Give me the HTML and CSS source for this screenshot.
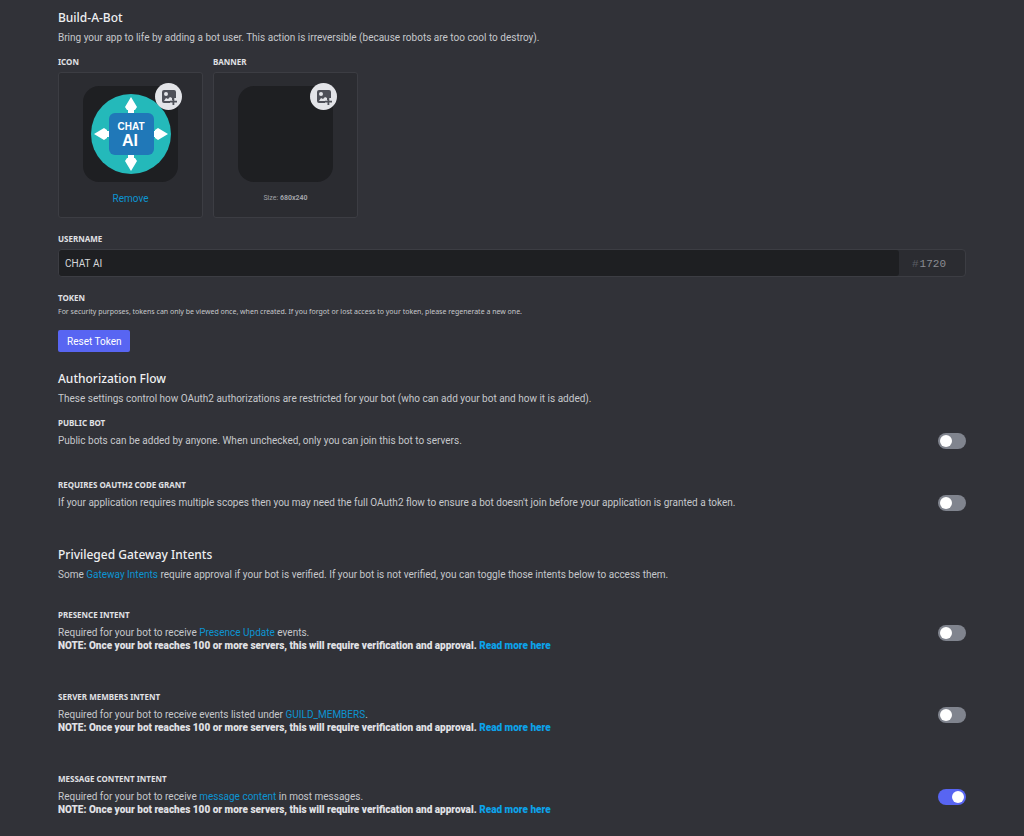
FILE: index.html
```html
<!DOCTYPE html>
<html lang="en">
<head>
    <meta charset="UTF-8">
    <meta name="viewport" content="width=device-width, initial-scale=1.0">
    <title>Build-A-Bot</title>
    <link rel="stylesheet" href="styles.css">
</head>
<body>
    <!-- shared "add image" icon -->
    <svg class="sprite" aria-hidden="true">
        <symbol id="add-image" viewBox="0 0 16 16">
            <path fill="#4e5058" fill-rule="evenodd" d="M3 1h10a2 2 0 0 1 2 2v6h-3v2H9v3H3a2 2 0 0 1-2-2V3a2 2 0 0 1 2-2zm2 2a2 2 0 1 0 0 4 2 2 0 0 0 0-4z"/>
            <path fill="#e3e4e8" d="M3 12l2-3 2 1 2-2 2 1v3H9v0H3z"/>
            <path fill="#4e5058" d="M11.500 9h1.800v2.700H16v1.800h-2.700V16h-1.800v-2.500H9v-1.800h2.500z"/>
        </symbol>
    </svg>

    <main class="container">
        <section class="build-section">
            <h2>Build-A-Bot</h2>
            <p>Bring your app to life by adding a bot user. This action is irreversible (because robots are too cool to destroy).</p>
            <div class="uploads">
                <div class="upload">
                    <h3>Icon</h3>
                    <div class="card">
                        <div class="preview">
                            <svg class="avatar" viewBox="0 0 80 80" role="img" aria-label="Chat AI">
                                <circle cx="40" cy="40" r="40" fill="#24b9ba"/>
                                <g fill="#fff">
                                    <path d="M40 3l6 10-2 3h-1v6h-6v-6h-1l-2-3z"/>
                                    <path d="M40 77l6-10-2-3h-1v-6h-6v6h-1l-2 3z"/>
                                    <path d="M3 40l10-6 3 2v1h6v6h-6v1l-3 2z"/>
                                    <path d="M77 40l-10-6-3 2v1h-6v6h6v1l3 2z"/>
                                </g>
                                <rect x="18" y="19" width="45" height="42" rx="6" fill="#2078b8"/>
                                <text class="logo-small" x="40" y="36">CHAT</text>
                                <text class="logo-big" x="39" y="52">AI</text>
                            </svg>
                            <button class="add" type="button" aria-label="Upload icon"><svg><use href="#add-image"/></svg></button>
                        </div>
                        <a class="remove" href="#">Remove</a>
                    </div>
                </div>
                <div class="upload">
                    <h3>Banner</h3>
                    <div class="card">
                        <div class="preview">
                            <button class="add" type="button" aria-label="Upload banner"><svg><use href="#add-image"/></svg></button>
                        </div>
                        <span class="size">Size: <b>680x240</b></span>
                    </div>
                </div>
            </div>

            <label class="title" for="username">Username</label>
            <div class="username">
                <input type="text" id="username" value="CHAT AI">
                <span class="tag"><span>#</span>1720</span>
            </div>

            <h3>Token</h3>
            <p class="note">For security purposes, tokens can only be viewed once, when created. If you forgot or lost access to your token, please regenerate a new one.</p>
            <button class="reset" type="button">Reset Token</button>
        </section>

        <section>
            <h2>Authorization Flow</h2>
            <p>These settings control how OAuth2 authorizations are restricted for your bot (who can add your bot and how it is added).</p>
            <div class="setting">
                <div>
                    <label class="title" for="public-bot">Public Bot</label>
                    <p>Public bots can be added by anyone. When unchecked, only you can join this bot to servers.</p>
                </div>
                <input class="switch" type="checkbox" id="public-bot">
            </div>
            <div class="setting">
                <div>
                    <label class="title" for="code-grant">Requires OAuth2 Code Grant</label>
                    <p>If your application requires multiple scopes then you may need the full OAuth2 flow to ensure a bot doesn't join before your application is granted a token.</p>
                </div>
                <input class="switch" type="checkbox" id="code-grant">
            </div>
        </section>

        <section class="intents">
            <h2>Privileged Gateway Intents</h2>
            <p>Some <a href="#">Gateway Intents</a> require approval if your bot is verified. If your bot is not verified, you can toggle those intents below to access them.</p>
            <div class="setting">
                <div>
                    <label class="title" for="presence">Presence Intent</label>
                    <p>Required for your bot to receive <a href="#">Presence Update</a> events.</p>
                    <p class="warning">NOTE: Once your bot reaches 100 or more servers, this will require verification and approval. <a href="#">Read more here</a></p>
                </div>
                <input class="switch" type="checkbox" id="presence">
            </div>
            <div class="setting">
                <div>
                    <label class="title" for="members">Server Members Intent</label>
                    <p>Required for your bot to receive events listed under <a href="#">GUILD_MEMBERS</a>.</p>
                    <p class="warning">NOTE: Once your bot reaches 100 or more servers, this will require verification and approval. <a href="#">Read more here</a></p>
                </div>
                <input class="switch" type="checkbox" id="members">
            </div>
            <div class="setting">
                <div>
                    <label class="title" for="message">Message Content Intent</label>
                    <p>Required for your bot to receive <a href="#">message content</a> in most messages.</p>
                    <p class="warning">NOTE: Once your bot reaches 100 or more servers, this will require verification and approval. <a href="#">Read more here</a></p>
                </div>
                <input class="switch" type="checkbox" id="message" checked>
            </div>
        </section>
    </main>
</body>
</html>
```
FILE: styles.css
```css
* {
    box-sizing: border-box;
}

body {
    margin: 0;
    background-color: #313238;
    color: #c6c8cc;
    font-family: Roboto, sans-serif;
    font-size: 10px;
    line-height: 13px;
}

.sprite {
    display: none;
}

.container {
    padding: 10px 58px 19px;
}

h2, h3, p {
    margin: 0;
}

h2 {
    color: #eeeff1;
    font-family: "Noto Sans", sans-serif;
    font-size: 12px;
    font-weight: 500;
    line-height: 16px;
    margin-bottom: 5px;
}

h3, .title {
    display: block;
    color: #e0e1e5;
    font-family: "Noto Sans", sans-serif;
    font-size: 8px;
    font-weight: 700;
    line-height: 10px;
    text-transform: uppercase;
}

a {
    color: #0c94d2;
    text-decoration: none;
}

button {
    border: none;
    padding: 0;
    font-family: inherit;
    cursor: pointer;
}

.build-section {
    margin-bottom: 19px;
}

/* Icon and banner */
.uploads {
    display: flex;
    gap: 10px;
    margin: 13px 0 16px;
}

.card {
    display: flex;
    flex-direction: column;
    align-items: center;
    width: 145px;
    height: 146px;
    margin-top: 5px;
    padding-top: 13px;
    background-color: #2b2c31;
    border: 1px solid #3c3d43;
    border-radius: 3px;
}

.preview {
    position: relative;
    display: flex;
    align-items: center;
    justify-content: center;
    width: 95px;
    height: 96px;
    margin-bottom: 10px;
    background-color: #1e1f22;
    border-radius: 16px;
}

.avatar {
    width: 80px;
    height: 80px;
}

.avatar text {
    fill: #fff;
    font-family: "Liberation Sans", sans-serif;
    font-weight: 700;
    text-anchor: middle;
}

.logo-small {
    font-size: 10px;
}

.logo-big {
    font-size: 16px;
}

.add {
    position: absolute;
    top: -3px;
    right: -4px;
    display: flex;
    align-items: center;
    justify-content: center;
    width: 27px;
    height: 27px;
    background-color: #e3e4e8;
    border-radius: 50%;
}

.add svg {
    width: 16px;
    height: 16px;
}

.size {
    color: #a0a2a8;
    font-size: 7px;
}

/* Username and token */
.username {
    display: flex;
    height: 28px;
    margin: 5px 0 16px;
    background-color: #2b2c31;
    border: 1px solid #3c3d43;
    border-radius: 4px;
}

.username input {
    flex: 1;
    min-width: 0;
    padding: 0 6px;
    background-color: #1e1f22;
    border: none;
    border-radius: 3px;
    color: #d5d7da;
    font-family: inherit;
    font-size: 10px;
}

.tag {
    width: 66px;
    padding-left: 13px;
    color: #8b8d93;
    font-family: "Liberation Mono", monospace;
    font-size: 11px;
    line-height: 28px;
}

.tag span {
    margin-right: 1px;
    color: #5a5c63;
}

.note {
    margin: 2px 0 12px;
    font-family: "Noto Sans", sans-serif;
    font-size: 7px;
}

.reset {
    display: block;
    height: 22px;
    padding: 0 9px;
    background-color: #5865f2;
    border-radius: 2px;
    color: #fff;
    font-size: 10px;
}

/* Toggle rows */
.setting {
    display: flex;
    align-items: flex-start;
    justify-content: space-between;
    gap: 20px;
    margin: 13px 0 31px;
}

.setting .title {
    margin-bottom: 6px;
}

.intents {
    margin-top: 36px;
}

.intents .setting {
    margin: 29px 0 40px;
}

.intents .setting:last-child {
    margin-bottom: 0;
}

.warning {
    color: #e0e1e5;
    font-weight: 900;
}

.warning a {
    color: #0ca2ea;
}

.switch {
    flex: none;
    appearance: none;
    display: flex;
    width: 28px;
    height: 16px;
    margin: 15px 0 0;
    padding: 2px;
    background-color: #80848e;
    border-radius: 8px;
    cursor: pointer;
}

.switch::before {
    content: "";
    width: 12px;
    height: 12px;
    background-color: #fff;
    border-radius: 50%;
}

.switch:checked {
    justify-content: flex-end;
    background-color: #5865f2;
}
```
